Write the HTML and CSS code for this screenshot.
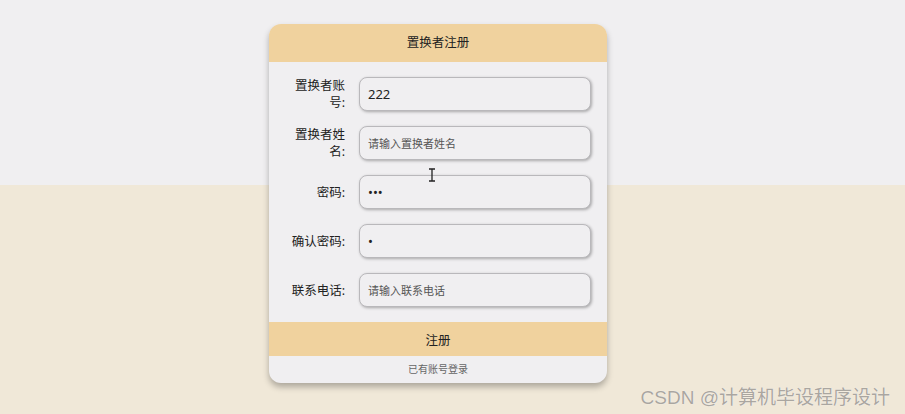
FILE: index.html
```html
<!DOCTYPE html>
<html lang="zh-CN">
<head>
    <meta charset="UTF-8">
    <meta name="viewport" content="width=device-width, initial-scale=1.0">
    <title>置换者注册</title>
    <link rel="stylesheet" href="styles.css">
</head>
<body>
    <div class="page">
        <div class="card">
            <div class="card-head">置换者注册</div>
            <form class="form">
                <label class="label" for="account">置换者账号:</label>
                <input class="field" id="account" type="text" value="222">

                <label class="label" for="name">置换者姓名:</label>
                <input class="field" id="name" type="text" placeholder="请输入置换者姓名">

                <label class="label" for="pwd">密码:</label>
                <input class="field" id="pwd" type="password" value="123">

                <label class="label" for="pwd2">确认密码:</label>
                <input class="field" id="pwd2" type="password" value="1">

                <label class="label" for="phone">联系电话:</label>
                <input class="field" id="phone" type="text" placeholder="请输入联系电话">
            </form>
            <button class="submit" type="button">注册</button>
            <a class="login-link" href="#">已有账号登录</a>
        </div>
        <svg class="ibeam" width="8" height="14" viewBox="0 0 8 14">
            <path d="M1 1h6M4 1v12M1 13h6" stroke="#222" stroke-width="1.3" fill="none"/>
        </svg>
    </div>
    <div class="watermark">CSDN @计算机毕设程序设计</div>
</body>
</html>
```

FILE: styles.css
```css
html, body { margin: 0; height: 100%; }
body {
    font-family: "Noto Sans", "Noto Sans CJK SC", sans-serif;
    background: linear-gradient(to bottom, #f0eff1 0, #f0eff1 185px, #f0e8d8 185px);
    position: relative;
    overflow: hidden;
}
.page { padding-top: 24px; padding-left: 269px; position: relative; }
.card {
    width: 338px;
    background: #f0eff1;
    border-radius: 12px;
    overflow: hidden;
    box-shadow: 0 4px 6px rgba(0, 0, 0, 0.28);
}
.card-head {
    height: 38px;
    line-height: 38px;
    text-align: center;
    background: #f0d29e;
    font-size: 12.5px;
    color: #222;
}
.form {
    display: grid;
    grid-template-columns: 60px 232px;
    column-gap: 14px;
    row-gap: 15px;
    align-items: center;
    padding: 15px 16px;
}
.label {
    text-align: right;
    font-size: 12.5px;
    line-height: 17px;
    color: #222;
}
.field {
    box-sizing: border-box;
    height: 34px;
    width: 232px;
    border: 1.5px solid #b9b8bb;
    border-radius: 8px;
    background: #f0eff1;
    box-shadow: 1px 1px 3px rgba(0, 0, 0, 0.3);
    padding: 0 8px;
    font-family: inherit;
    font-size: 13px;
    color: #222;
    outline: none;
}
.field::placeholder { color: #555; font-size: 11px; }
.submit {
    display: block;
    width: 100%;
    height: 34px;
    border: none;
    background: #f0d29e;
    font-family: inherit;
    font-size: 12.5px;
    color: #222;
}
.login-link {
    display: block;
    height: 27px;
    line-height: 27px;
    text-align: center;
    font-size: 10px;
    color: #666;
    text-decoration: none;
}
.ibeam { position: absolute; left: 428px; top: 168px; }
.watermark {
    position: absolute;
    right: 15px;
    bottom: 5px;
    font-family: "Liberation Sans", "Noto Sans CJK SC", sans-serif;
    font-size: 19px;
    color: #aaa6a0;
    text-shadow: 0 0 1px #fff;
}
```
